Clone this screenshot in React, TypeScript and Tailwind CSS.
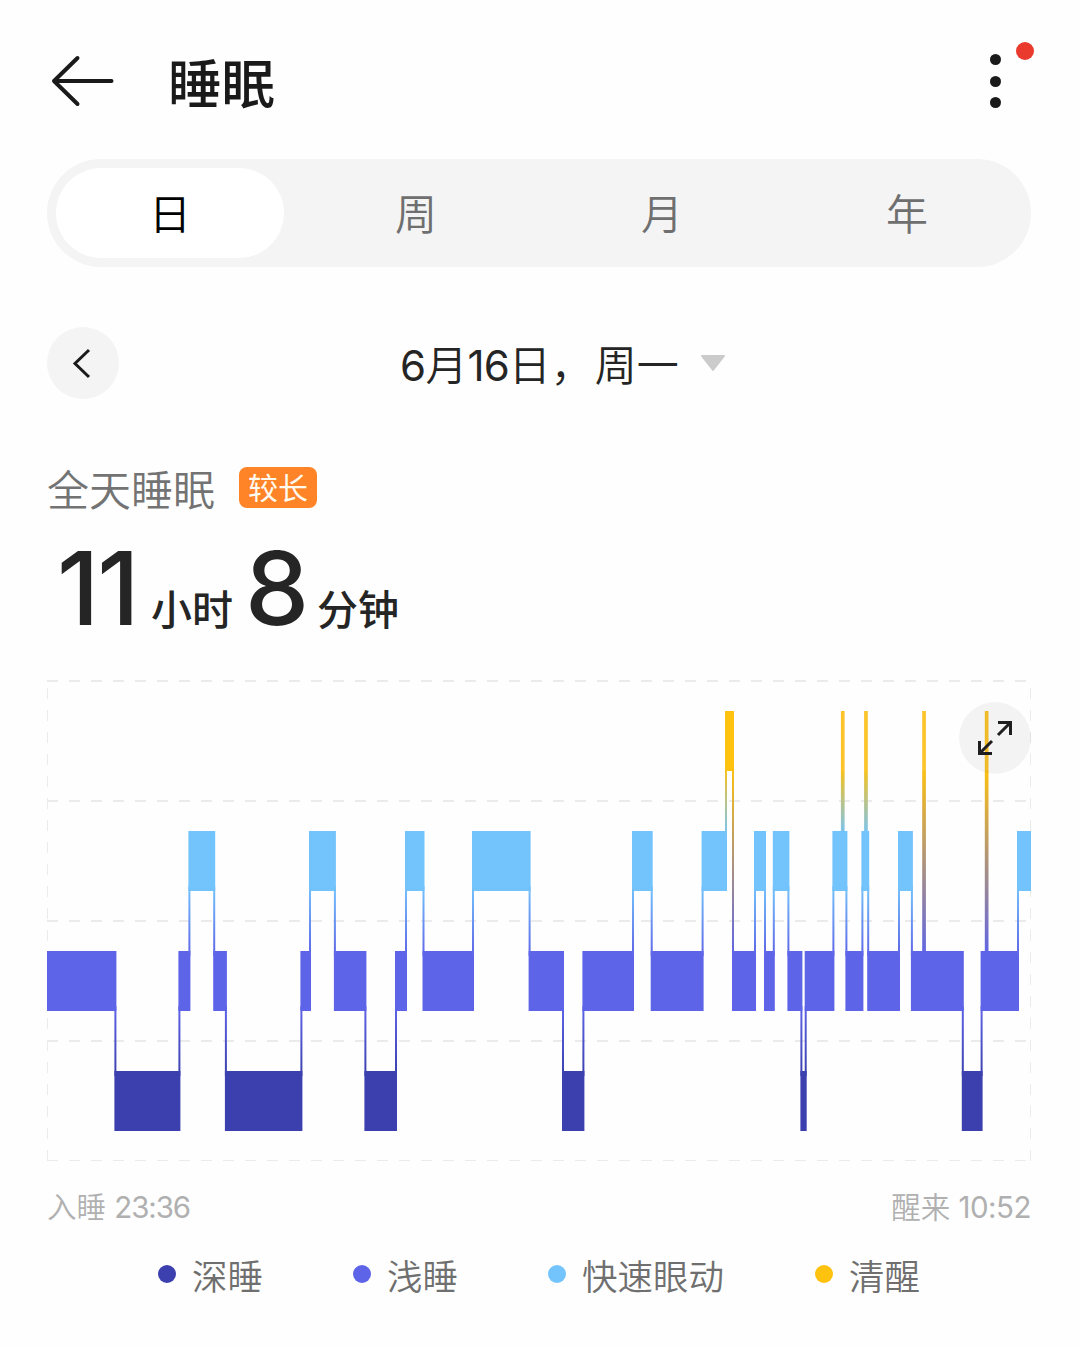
type Stage = "awake" | "rem" | "light" | "deep";

const COLORS: Record<Stage, string> = {
  awake: "#ffc20e",
  rem: "#73c4fc",
  light: "#5e64e8",
  deep: "#3b40ae",
};

// Top edge of each stage band inside the chart.
const TOP: Record<Stage, number> = { awake: 31, rem: 151, light: 271, deep: 391 };
const BAND = 60;
const WIDTH = 984;

// [start x, stage]; every block overlaps the following one by the 2px connector.
const STAGES: [number, Stage][] = [
  [0, "light"], [67.4, "deep"], [131.4, "light"], [141.4, "rem"], [166.2, "light"],
  [177.9, "deep"], [253.4, "light"], [262, "rem"], [286.9, "light"], [317.4, "deep"],
  [348, "light"], [358, "rem"], [375.5, "light"], [425, "rem"], [481.6, "light"],
  [515, "deep"], [535.4, "light"], [585, "rem"], [603.7, "light"], [654.6, "rem"],
  [678, "awake"], [685, "light"], [707, "rem"], [717, "light"], [725.8, "rem"],
  [740.4, "light"], [753.4, "deep"], [757.7, "light"], [785.4, "rem"], [798.4, "light"],
  [814.4, "rem"], [820.2, "light"], [851, "rem"], [863.9, "light"], [914.8, "deep"],
  [933.6, "light"], [970, "rem"],
];

// Short awakenings drawn as spikes rising from another stage.
const SPIKES: [number, "rem" | "light"][] = [
  [793.9, "rem"], [817.1, "rem"], [875.2, "light"], [937.8, "light"],
];

const GRADIENTS: [Stage, Stage][] = [
  ["awake", "rem"], ["awake", "light"], ["rem", "light"], ["light", "deep"],
];

function SleepChart() {
  return (
    <svg width="984" height="481" viewBox="0 0 984 481" className="block">
      <defs>
        {GRADIENTS.map(([a, b]) => (
          <linearGradient
            key={a + b}
            id={`${a}-${b}`}
            gradientUnits="userSpaceOnUse"
            x1="0"
            x2="0"
            y1={TOP[a] + BAND - 5}
            y2={TOP[b] + 5}
          >
            <stop offset="0" stopColor={COLORS[a]} />
            <stop offset="1" stopColor={COLORS[b]} />
          </linearGradient>
        ))}
      </defs>
      <g stroke="#ebebeb" strokeWidth="2" strokeDasharray="11 11">
        {[1, 121, 241, 361, 481].map((y) => (
          <path key={y} d={`M0 ${y}H984`} />
        ))}
        <path d="M0 481V0M984 481V0" />
      </g>
      {STAGES.map(([x, s], i) => {
        const end = i + 1 < STAGES.length ? STAGES[i + 1][0] + 2 : WIDTH;
        return <rect key={x} x={x} y={TOP[s]} width={end - x} height={BAND} fill={COLORS[s]} />;
      })}
      {STAGES.slice(1).map(([x, s], i) => {
        const prev = STAGES[i][1];
        const [a, b] = TOP[prev] < TOP[s] ? [prev, s] : [s, prev];
        const y = TOP[a] + BAND - 5;
        return <rect key={x} x={x} y={y} width="2" height={TOP[b] + 5 - y} fill={`url(#${a}-${b})`} />;
      })}
      {SPIKES.map(([x, s]) => (
        <g key={x}>
          <rect x={x} y={TOP.awake} width="3.7" height={BAND} fill="#fac42a" />
          <rect x={x} y={91} width="3.7" height={TOP[s] - 91} fill={`url(#awake-${s})`} />
        </g>
      ))}
    </svg>
  );
}

const LEGEND = [
  { label: "深睡", dot: "bg-[#3b40ae]", box: "w-[195px]" },
  { label: "浅睡", dot: "bg-[#5e64e8]", box: "w-[195px]" },
  { label: "快速眼动", dot: "bg-[#73c4fc]", box: "w-[267px]" },
  { label: "清醒", dot: "bg-[#ffc20e]", box: "w-[120px]" },
];

export default function App() {
  return (
    <div className="flex h-[1346px] w-[1079px] flex-col overflow-hidden whitespace-nowrap bg-[#fefefe] pl-[47px] pr-12 font-['Inter','Noto_Sans_CJK_SC',sans-serif] text-[#252525]">
      <header className="flex h-[159px] shrink-0 items-start">
        <svg width="68" height="54" viewBox="0 0 68 54" className="mt-[54px] shrink-0" fill="none" stroke="#1a1a1a" strokeWidth="4" strokeLinecap="round" strokeLinejoin="round">
          <path d="M64.500 27H7M30.500 4L7 27L30.500 50" />
        </svg>
        <h1 className="ml-[53px] mt-[45px] text-[53.500px] font-medium leading-[80px] text-[#1a1a1a]">睡眠</h1>
        <div className="relative ml-auto mr-[30px] mt-[54px] flex h-[54px] w-[11px] flex-col justify-between">
          <i className="size-[11px] rounded-full bg-[#1a1a1a]" />
          <i className="size-[11px] rounded-full bg-[#1a1a1a]" />
          <i className="size-[11px] rounded-full bg-[#1a1a1a]" />
          <i className="absolute -top-3 left-[26px] size-[18px] rounded-full bg-[#ea3a2e]" />
        </div>
      </header>

      <nav className="flex h-[108px] shrink-0 items-center rounded-full bg-[#f4f4f4] p-[9px] text-[42px] font-[350] text-[#6f6f6f]">
        <span className="flex h-[90px] w-[228px] items-center justify-center rounded-full bg-white pt-[3px] text-black">日</span>
        <span className="ml-[18px] w-[228px] pt-[3px] text-center">周</span>
        <span className="ml-[18px] w-[228px] pt-[3px] text-center">月</span>
        <span className="ml-[17px] w-[228px] pt-[3px] text-center">年</span>
      </nav>

      <div className="mt-[60px] flex h-[72px] shrink-0 items-center">
        <span className="flex size-[72px] items-center justify-center rounded-full bg-[#f4f4f4]">
          <svg width="72" height="72" viewBox="0 0 72 72" fill="none" stroke="#1a1a1a" strokeWidth="3">
            <path d="M42 23L28 36.500L42 50" />
          </svg>
        </span>
        <span className="ml-[281px] w-[277px] pt-[5px] text-[42px] font-[350] leading-[60px]">
          <span className="font-normal tracking-[-0.500px]">6</span>月<span className="font-normal tracking-[-1px]">16</span>日，<span className="ml-[2px]">周一</span>
        </span>
        <svg width="26" height="18" viewBox="0 0 26 18" className="ml-[23px]" fill="#cbcbcb" stroke="#cbcbcb" strokeWidth="2" strokeLinejoin="round">
          <path d="M2 2H24L13 16Z" />
        </svg>
      </div>

      <div className="mt-[68px] flex h-[41px] shrink-0 items-center">
        <span className="pt-[5px] text-[42px] font-[350] leading-[41px] text-[#737373]">全天睡眠</span>
        <span className="ml-6 flex h-[41px] w-[78px] items-center justify-center rounded-[8px] bg-[#ff8428] pt-[2px] text-[30px] text-[#fffaf0]">较长</span>
      </div>

      <div className="mt-[25px] flex h-[108px] shrink-0 items-baseline font-medium leading-[110px]">
        <span className="ml-[10px] w-[94px] text-[102px] tracking-[-2px]">11</span>
        <span className="w-[94px] text-[41px]">小时</span>
        <span className="w-[72px] text-[102px]">8</span>
        <span className="text-[41px]">分钟</span>
      </div>

      <div className="relative mt-[39px] h-[481px] shrink-0">
        <SleepChart />
        <span className="absolute right-0 top-[22px] size-[72px] rounded-full bg-black/[0.045]">
          <svg width="72" height="72" viewBox="0 0 72 72" fill="none" stroke="#1f1f1f" strokeWidth="3">
            <path d="M39 20.500H51.500V33M51 21L39 33M20.500 39V51.500H33M21 51L33 39" />
          </svg>
        </span>
      </div>

      <div className="mt-[25px] flex h-[42px] shrink-0 items-center justify-between text-[29.500px] font-[350] leading-[42px] text-[#b0b0b0]">
        <span>入睡 <span className="font-normal tracking-[-1.100px]">23:36</span></span>
        <span>醒来 <span className="font-normal tracking-[-0.500px]">10:52</span></span>
      </div>

      <div className="mt-[22px] flex h-[50px] shrink-0 items-center pl-[111px] text-[35.500px] font-[350] leading-[50px] text-[#6f6f6f]">
        {LEGEND.map((item) => (
          <span key={item.label} className={`flex items-center ${item.box}`}>
            <i className={`mb-[2px] mr-4 size-[18px] shrink-0 rounded-full ${item.dot}`} />
            <span className="pt-[5px]">{item.label}</span>
          </span>
        ))}
      </div>
    </div>
  );
}
